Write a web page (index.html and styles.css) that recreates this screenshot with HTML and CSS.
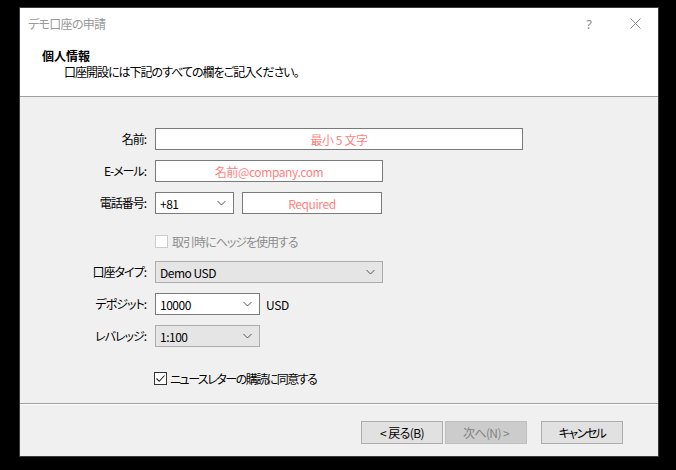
FILE: index.html
```html
<!DOCTYPE html>
<html lang="ja">
<head>
    <meta charset="UTF-8">
    <title>デモ口座の申請</title>
    <link rel="stylesheet" href="styles.css">
</head>
<body>
    <div class="window">
        <!-- タイトルバー -->
        <div class="titlebar">
            <span class="title">デモ口座の申請</span>
            <span class="tb-btn help">?</span>
            <span class="tb-btn close">
                <svg width="11" height="11" viewBox="0 0 11 11"><path d="M0.5 0.5 L10.5 10.5 M10.5 0.5 L0.5 10.5" stroke="#8a8a8a" stroke-width="1" fill="none"/></svg>
            </span>
        </div>

        <!-- ヘッダー -->
        <div class="header">
            <div class="header-title">個人情報</div>
            <div class="header-sub">口座開設には下記のすべての欄をご記入ください。</div>
        </div>

        <!-- フォーム -->
        <div class="content">
            <div class="form">
                <label class="label">名前:</label>
                <input class="input w-name" type="text" placeholder="最小 5 文字">

                <label class="label">E-メール:</label>
                <input class="input w-mid" type="text" placeholder="名前@company.com">

                <label class="label">電話番号:</label>
                <div class="row">
                    <div class="combo w-code">
                        <span>+81</span>
                        <svg class="chev" width="9" height="6" viewBox="0 0 9 6"><path d="M0.5 1 L4.5 5 L8.5 1" stroke="#555" fill="none"/></svg>
                    </div>
                    <input class="input w-phone" type="text" placeholder="Required">
                </div>

                <div class="check-row disabled hedge">
                    <span class="box"></span>
                    <span>取引時にヘッジを使用する</span>
                </div>

                <label class="label">口座タイプ:</label>
                <div class="combo list w-mid">
                    <span>Demo USD</span>
                    <svg class="chev" width="9" height="6" viewBox="0 0 9 6"><path d="M0.5 1 L4.5 5 L8.5 1" stroke="#555" fill="none"/></svg>
                </div>

                <label class="label">デポジット:</label>
                <div class="row">
                    <div class="combo w-small">
                        <span>10000</span>
                        <svg class="chev" width="9" height="6" viewBox="0 0 9 6"><path d="M0.5 1 L4.5 5 L8.5 1" stroke="#555" fill="none"/></svg>
                    </div>
                    <span class="unit">USD</span>
                </div>

                <label class="label">レバレッジ:</label>
                <div class="combo list w-small">
                    <span>1:100</span>
                    <svg class="chev" width="9" height="6" viewBox="0 0 9 6"><path d="M0.5 1 L4.5 5 L8.5 1" stroke="#555" fill="none"/></svg>
                </div>

                <div class="check-row news">
                    <span class="box checked">
                        <svg width="11" height="11" viewBox="0 0 11 11"><path d="M1.5 5.5 L4.2 8.3 L9.5 2.5" stroke="#222" stroke-width="1.1" fill="none"/></svg>
                    </span>
                    <span>ニュースレターの購読に同意する</span>
                </div>
            </div>
        </div>

        <!-- ボタン -->
        <div class="footer">
            <button class="btn">&lt; 戻る(B)</button>
            <button class="btn" disabled>次へ(N) &gt;</button>
            <button class="btn cancel">キャンセル</button>
        </div>
    </div>
</body>
</html>
```

FILE: styles.css
```css
/* 背景は黒、ダイアログを左上に置く */
body {
    margin: 0;
    padding: 7px 0 0 19px;
    background: #000;
    font-family: "Noto Sans CJK JP", sans-serif;
    font-size: 12px;
    font-feature-settings: "palt" 1;
    letter-spacing: -1px; /* かなを詰める */
    color: #000;
}

.window {
    width: 638px;
    height: 448px;
    border: 1px solid #3a3a3a;
    background: #f0f0f0;
    display: flex;
    flex-direction: column;
}

/* タイトルバー */
.titlebar {
    height: 31px;
    background: #fff;
    display: flex;
    align-items: center;
    padding-left: 8px;
}

.title {
    flex: 1;
    color: #999;
    font-size: 12px;
    letter-spacing: -0.7px;
}

.tb-btn {
    width: 46px;
    height: 31px;
    display: flex;
    align-items: center;
    justify-content: center;
    color: #8a8a8a;
    font-family: "Noto Sans", sans-serif;
    font-size: 13px;
    letter-spacing: 0;
}

/* ヘッダー */
.header {
    height: 58px;
    background: #fff;
    border-bottom: 1px solid #a0a0a0;
    padding-top: 9px;
    box-sizing: border-box;
}

.header-title {
    font-weight: bold;
    line-height: 16px;
    padding-left: 22px;
    letter-spacing: 0;
}

.header-sub {
    line-height: 16px;
    padding-left: 44px;
}

/* フォーム */
.content {
    flex: 1;
}

.form {
    display: grid;
    grid-template-columns: 126px 1fr;
    column-gap: 9px;
    row-gap: 10px;
    align-items: center;
    padding-top: 31px;
}

.label {
    text-align: right;
    line-height: 22px;
}

.row {
    display: flex;
    align-items: center;
}

.input {
    height: 22px;
    box-sizing: border-box;
    border: 1px solid #7a7a7a;
    background: #fff;
    margin: 0;
    padding: 0 4px;
    font-family: inherit;
    font-size: 12px;
    letter-spacing: -0.4px;
    text-align: center;
    outline: none;
}

.input::placeholder {
    color: #ff7f80;
    opacity: 1;
}

.w-name { width: 368px; }
.w-mid { width: 228px; }
.w-code { width: 79px; }
.w-phone { width: 140px; margin-left: 8px; }
.w-small { width: 105px; }

.combo {
    height: 22px;
    box-sizing: border-box;
    border: 1px solid #7a7a7a;
    background: #fff;
    display: flex;
    align-items: center;
    justify-content: space-between;
    padding: 0 7px 0 4px;
    letter-spacing: -0.5px;
}

.combo.list {
    background: #e5e5e5;
    border-color: #adadad;
}

.chev {
    display: block;
}

.unit {
    margin-left: 6px;
    letter-spacing: -0.3px;
}

/* チェックボックス */
.check-row {
    grid-column: 2;
    height: 20px;
    display: flex;
    align-items: center;
    gap: 4px;
}

.check-row.hedge { margin-top: 7px; }
.check-row.news {
    margin-top: 11px;
    margin-left: -1px;
    gap: 3px;
    letter-spacing: -1.5px;
}

.check-row.disabled {
    color: #8d8d8d;
}

.box {
    width: 13px;
    height: 13px;
    box-sizing: border-box;
    border: 1px solid #cccccc;
    background: #fff;
    display: flex;
    align-items: center;
    justify-content: center;
}

.box.checked {
    border-color: #333;
}

/* 下部のボタン */
.footer {
    height: 35px;
    border-top: 1px solid #a0a0a0;
    box-shadow: inset 0 1px 0 #fff;
    display: flex;
    justify-content: flex-end;
    align-items: flex-start;
    padding: 17px 35px 0 0;
    gap: 2px;
}

.btn {
    width: 82px;
    height: 23px;
    margin: 0;
    padding: 0;
    border: 1px solid #adadad;
    background: #e1e1e1;
    font-family: inherit;
    font-size: 12px;
    font-feature-settings: "palt" 1;
    letter-spacing: -0.6px;
    color: #000;
}

.btn:disabled {
    background: #cccccc;
    border-color: #bfbfbf;
    color: #838383;
}

.btn.cancel {
    margin-left: 12px;
    letter-spacing: -1.5px;
}
```
